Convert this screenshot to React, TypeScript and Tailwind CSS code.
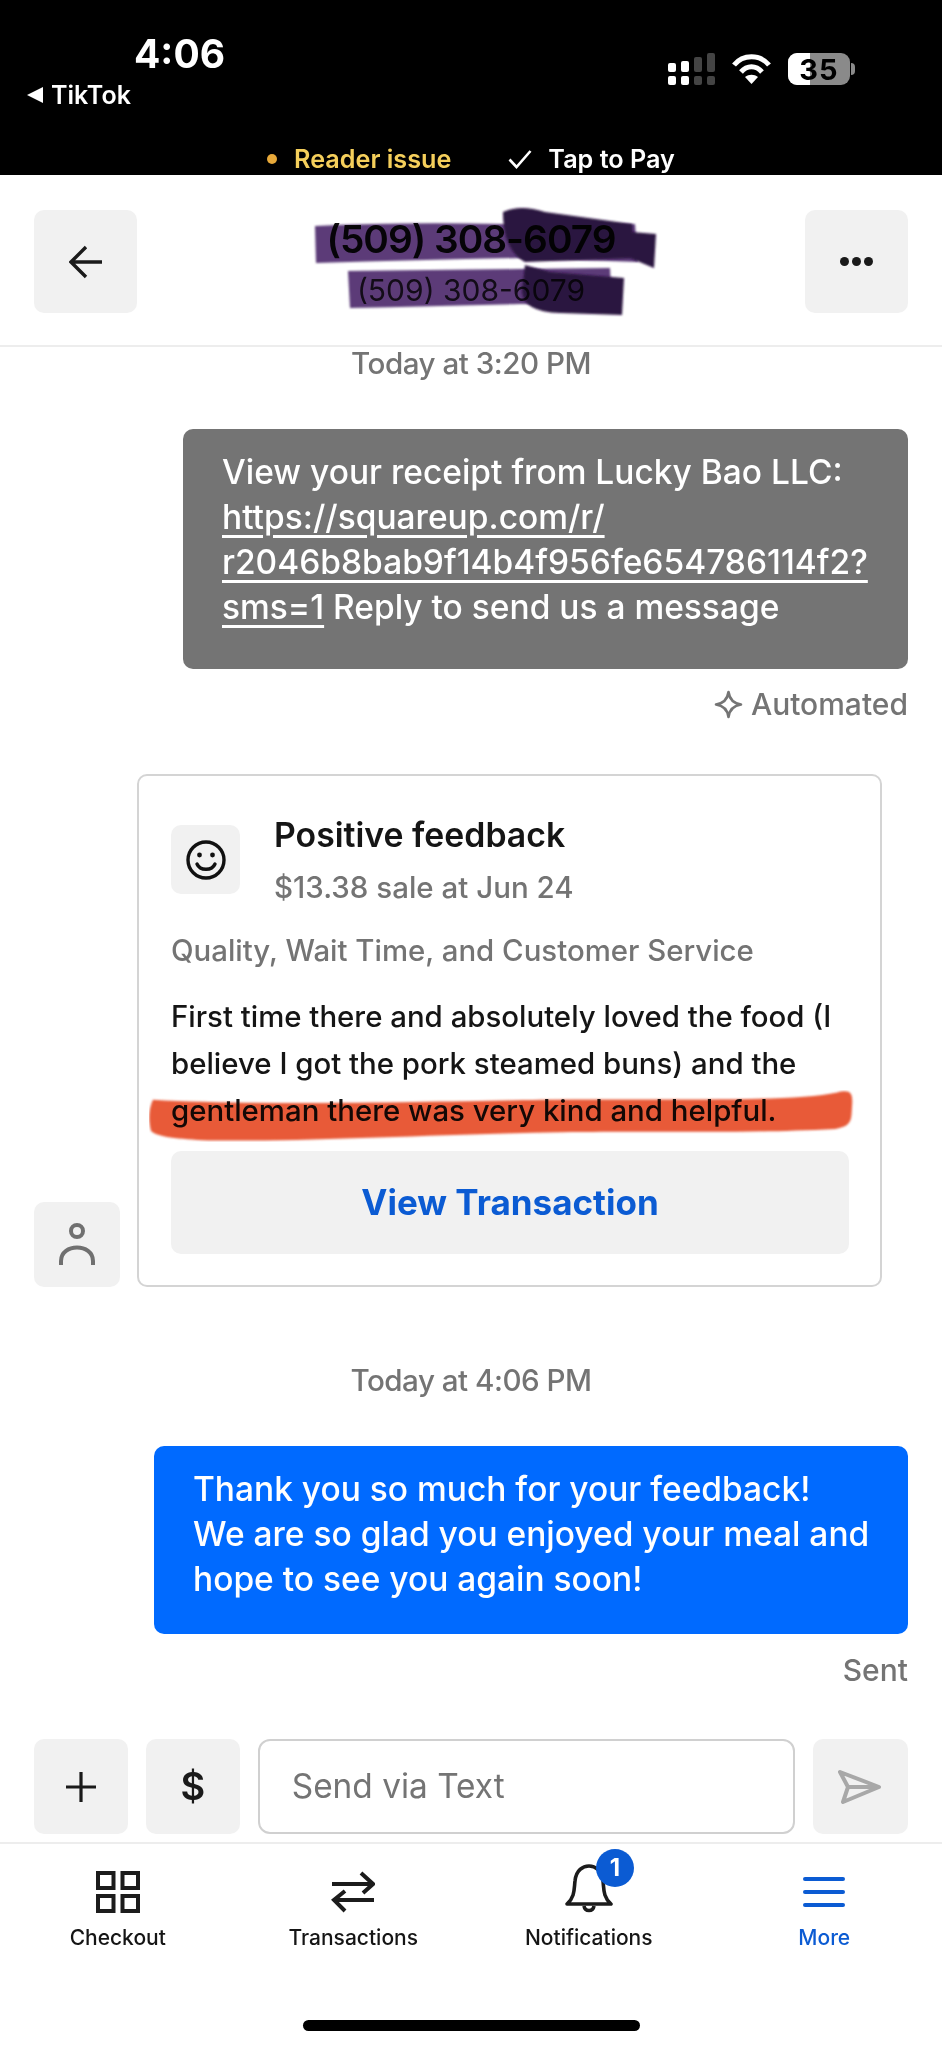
const font = { fontFamily: 'Inter, "Liberation Sans", sans-serif' };

function StatusBar() {
  return (
    <div className="relative flex h-[175px] flex-col bg-black text-white">
      <div className="flex h-[132px] justify-between pl-[27px] pr-[87px] pt-[31px]">
        <div>
          <div className="pl-[107px] text-[39px] font-bold leading-[46px]">4:06</div>
          <div className="mt-[3px] flex items-center gap-[8px] text-[25px] font-semibold leading-[30px]">
            <svg width="16" height="16" viewBox="0 0 16 16"><path d="M16 0 V16 L0 8 Z" fill="#fff" /></svg>
            TikTok
          </div>
        </div>
        <div className="mt-[22px] flex h-[32px] items-center gap-[16px]">
          <svg width="47" height="32" viewBox="0 0 47 32">
            <rect x="0" y="10" width="8" height="9" rx="2" fill="#fff" />
            <rect x="13" y="8" width="8" height="11" rx="2" fill="#fff" />
            <rect x="26" y="4" width="8" height="15" rx="2" fill="#444" />
            <rect x="39" y="0" width="8" height="19" rx="2" fill="#444" />
            <rect x="0" y="23" width="8" height="9" rx="2" fill="#fff" />
            <rect x="13" y="23" width="8" height="9" rx="2" fill="#fff" />
            <rect x="26" y="23" width="8" height="9" rx="2" fill="#444" />
            <rect x="39" y="23" width="8" height="9" rx="2" fill="#444" />
          </svg>
          <svg width="41" height="32" viewBox="0 0 41 32" fill="none" stroke="#fff" strokeWidth="5">
            <path d="M3 12 C12 1 29 1 38 12" />
            <path d="M10 19 C16 12 25 12 31 19" />
            <path d="M20.5 31 L14 24 C18 21 23 21 27 24 Z" fill="#fff" stroke="none" />
          </svg>
          <div className="flex items-center gap-[1px]">
            <div className="relative flex h-[32px] w-[62px] items-center justify-center overflow-hidden rounded-[9px] bg-[#8a8a8a]">
              <div className="absolute bottom-0 left-0 top-0 w-[22px] bg-white" />
              <span className="relative text-[29px] font-bold leading-none tracking-[1px] text-black">35</span>
            </div>
            <div className="h-[12px] w-[4px] rounded-r-full bg-[#8a8a8a]" />
          </div>
        </div>
      </div>
      <div className="flex h-[43px] items-center justify-center pt-[11px] text-[25.2px] font-semibold leading-[30px]">
        <div className="h-[10px] w-[10px] rounded-full bg-[#e8a93a]" />
        <span className="ml-[17px] text-[#f5cf5b]">Reader issue</span>
        <svg className="ml-[57px]" width="24" height="20" viewBox="0 0 24 20" fill="none" stroke="#fff" strokeWidth="2.6">
          <path d="M1.5 10.5 L8.5 18 L22.5 2" />
        </svg>
        <span className="ml-[16px]">Tap to Pay</span>
      </div>
    </div>
  );
}

function Header() {
  return (
    <div className="relative flex h-[172px] items-start justify-between border-b-2 border-[#ededed] bg-white px-[34px] pt-[35px]">
      <div className="flex h-[103px] w-[103px] items-center justify-center rounded-[10px] bg-[#f1f1f1]">
        <svg width="34" height="34" viewBox="0 0 34 34" fill="none" stroke="#1a1a1a" strokeWidth="3.4">
          <path d="M33 17 H3 M17 2 L2 17 L17 32" />
        </svg>
      </div>
      <div className="flex flex-col items-center pt-[6px]">
        <div className="text-[38.8px] font-semibold leading-[46px] tracking-[-1px] text-[#101010]">(509) 308-6079</div>
        <div className="mt-[10px] text-[30px] leading-[36px] text-[#333]">(509) 308-6079</div>
      </div>
      <div className="flex h-[103px] w-[103px] items-center justify-center gap-[3px] rounded-[10px] bg-[#f1f1f1]">
        <div className="h-[9px] w-[9px] rounded-full bg-[#1a1a1a]" />
        <div className="h-[9px] w-[9px] rounded-full bg-[#1a1a1a]" />
        <div className="h-[9px] w-[9px] rounded-full bg-[#1a1a1a]" />
      </div>
      {/* marker scribbles over the number */}
      <svg className="absolute left-0 top-0 mix-blend-multiply" width="942" height="172" viewBox="0 175 942 172">
        <defs>
          <filter id="soft"><feGaussianBlur stdDeviation="1.2" /></filter>
        </defs>
        <g fill="#5b3b78" filter="url(#soft)">
          <path d="M315 226 Q400 222 500 224 L635 224 L638 262 L520 258 Q420 260 316 263 Z" />
          <path d="M348 271 Q430 270 520 269 L610 268 L612 305 L520 304 Q430 306 350 308 Z" />
        </g>
        <g fill="#2c1240" filter="url(#soft)">
          <path d="M503 212 Q520 204 545 212 L632 224 L634 258 L525 262 Q503 250 503 212 Z" />
          <path d="M632 232 L656 234 L654 268 L630 258 Z" />
          <path d="M525 265 L550 272 L624 278 L622 315 L560 313 Q522 312 522 290 Z" />
        </g>
      </svg>
    </div>
  );
}

function Feedback() {
  return (
    <div className="flex items-end gap-[17px] pl-[34px]">
      <div className="flex h-[85px] w-[86px] items-center justify-center rounded-[10px] bg-[#f1f1f1]">
        <svg width="36" height="44" viewBox="0 0 36 44" fill="none" stroke="#707070" strokeWidth="4">
          <circle cx="18" cy="8" r="6" />
          <path d="M2 42 V38 C2 20 34 20 34 38 V42" />
        </svg>
      </div>
      <div className="relative h-[513px] w-[745px] rounded-[10px] border-2 border-[#d4d4d4] bg-white pl-[32px] pr-[31px]">
        <div className="flex gap-[34px] pt-[49px]">
          <div className="flex h-[69px] w-[69px] items-center justify-center rounded-[10px] bg-[#f1f1f1]">
            <svg width="40" height="40" viewBox="0 0 40 40" fill="none" stroke="#111" strokeWidth="3.4">
              <circle cx="20" cy="20" r="18" />
              <circle cx="13.5" cy="15" r="2.4" fill="#111" stroke="none" />
              <circle cx="26.5" cy="15" r="2.4" fill="#111" stroke="none" />
              <path d="M11 24 C14 31 26 31 29 24" strokeLinecap="round" />
            </svg>
          </div>
          <div className="-mt-[13px]">
            <div className="whitespace-nowrap text-[33.8px] font-semibold leading-[46px] text-[#151515]">Positive feedback</div>
            <div className="mt-[7px] whitespace-nowrap text-[29.5px] font-medium leading-[44px] text-[#747474]">$13.38 sale at Jun 24</div>
          </div>
        </div>
        <div className="mt-[20px] whitespace-nowrap text-[29.4px] font-medium leading-[44px] text-[#747474]">Quality, Wait Time, and Customer Service</div>
        <div className="mt-[20px] whitespace-nowrap text-[29.4px] font-medium leading-[47px] text-[#151515]">
          <div>First time there and absolutely loved the food (I</div>
          <div>believe I got the pork steamed buns) and the</div>
          <div>gentleman there was very kind and helpful.</div>
        </div>
        <div className="mt-[17px] flex h-[103px] items-center justify-center rounded-[10px] bg-[#f1f1f1] text-[35px] font-bold text-[#0b5bd3]">View Transaction</div>
        {/* orange marker over the last line */}
        <svg className="absolute left-[10px] top-[314px] mix-blend-multiply" width="706" height="52" viewBox="0 0 720 64" preserveAspectRatio="none">
          <defs>
            <filter id="softer"><feGaussianBlur stdDeviation="1" /></filter>
          </defs>
          <path filter="url(#softer)" d="M4 12 C120 20 300 14 400 12 C520 10 650 16 702 3 C716 -1 718 4 717 20 C716 36 718 44 700 48 C600 54 540 50 420 52 C300 54 160 64 60 62 C30 60 8 58 2 50 C-1 36 0 22 4 12 Z" fill="#e85a38" />
        </svg>
      </div>
    </div>
  );
}

function Composer() {
  return (
    <div className="flex h-[105px] gap-[18px] border-b-2 border-[#ededed] px-[34px] pb-[8px]">
      <div className="flex h-[95px] w-[94px] items-center justify-center rounded-[10px] bg-[#f1f1f1]">
        <svg width="32" height="32" viewBox="0 0 32 32" stroke="#1a1a1a" strokeWidth="3.2">
          <path d="M16 1 V31 M1 16 H31" />
        </svg>
      </div>
      <div className="flex h-[95px] w-[94px] items-center justify-center rounded-[10px] bg-[#f1f1f1] text-[38px] font-semibold text-[#1a1a1a]">$</div>
      <div className="flex h-[95px] w-[538px] items-center rounded-[12px] border-2 border-[#d0d0d0] pl-[32px] text-[33.4px] text-[#747474]">Send via Text</div>
      <div className="flex h-[95px] w-[95px] shrink-0 items-center justify-center rounded-[10px] bg-[#f1f1f1]">
        <svg width="44" height="34" viewBox="0 0 44 34" fill="none" stroke="#a8a8a8" strokeWidth="4" strokeLinejoin="round">
          <path d="M2 2 L41 17 L5 32 L10 17 Z M10 17 H41" />
        </svg>
      </div>
    </div>
  );
}

function BottomNav() {
  return (
    <div className="grid grid-cols-4 pt-[27px]">
      <div className="flex flex-col items-center">
        <svg width="44" height="42" viewBox="0 0 44 42" fill="none" stroke="#1c1c1c" strokeWidth="4">
          <rect x="2" y="2" width="15.5" height="15" />
          <rect x="26.5" y="2" width="15.5" height="15" />
          <rect x="2" y="25" width="15.5" height="15" />
          <rect x="26.5" y="25" width="15.5" height="15" />
        </svg>
        <div className="mt-[10px] text-[21px] font-medium leading-[30px] text-[#151515]">Checkout</div>
      </div>
      <div className="flex flex-col items-center">
        <svg width="44" height="42" viewBox="0 0 44 42" fill="none" stroke="#1c1c1c" strokeWidth="4">
          <path d="M1 13 H41 M30 2 L42 13 L32 22" />
          <path d="M43 29 H3 M14 20 L3 29 L14 40" />
        </svg>
        <div className="mt-[10px] text-[21px] font-medium leading-[30px] text-[#151515]">Transactions</div>
      </div>
      <div className="relative flex flex-col items-center">
        <svg width="48" height="50" className="-mt-[8px]" viewBox="0 0 48 50" fill="none" stroke="#1c1c1c" strokeWidth="3.6">
          <path d="M2 41 C10 34 9 26 10 18 C11 7 18 3 24 3 C30 3 37 7 38 18 C39 26 38 34 46 41 Z" strokeLinejoin="round" />
          <path d="M19 43 C20 49 28 49 29 43" />
        </svg>
        <div className="mt-[10px] text-[21px] font-medium leading-[30px] text-[#151515]">Notifications</div>
        <div className="absolute left-[125px] -top-[22px] flex h-[38px] w-[38px] items-center justify-center rounded-full bg-[#0b5bd3] text-[24px] font-bold text-white">1</div>
      </div>
      <div className="flex flex-col items-center">
        <div className="flex h-[42px] flex-col justify-center gap-[9px]">
          <div className="h-[4px] w-[42px] rounded-full bg-[#0b5bd3]" />
          <div className="h-[4px] w-[42px] rounded-full bg-[#0b5bd3]" />
          <div className="h-[4px] w-[42px] rounded-full bg-[#0b5bd3]" />
        </div>
        <div className="mt-[10px] text-[21px] font-medium leading-[30px] text-[#0b5bd3]">More</div>
      </div>
    </div>
  );
}

export default function App() {
  return (
    <div className="flex h-[2048px] w-[942px] flex-col overflow-hidden bg-white" style={font}>
      <StatusBar />
      <Header />
      <div className="-mt-[1px] text-center text-[29.6px] font-medium leading-[34px] tracking-[-0.5px] text-[#747474]">Today at 3:20 PM</div>
      <div className="flex justify-end px-[34px] pt-[49px]">
        <div className="w-[725px] rounded-[10px] bg-[#747474] pb-[39px] pl-[39px] pr-[20px] pt-[21px] text-[33.5px] font-medium leading-[45px] text-white">
          <div>View your receipt from Lucky Bao LLC:</div>
          <div className="underline underline-offset-[6px]">https://squareup.com/r/</div>
          <div className="underline underline-offset-[6px]">r2046b8bab9f14b4f956fe654786114f2?</div>
          <div><span className="underline underline-offset-[6px]">sms=1</span> Reply to send us a message</div>
        </div>
      </div>
      <div className="mt-[17px] flex items-center justify-end gap-[8px] pr-[34px] text-[30px] font-medium leading-[36px] text-[#747474]">
        <svg width="29" height="29" viewBox="0 0 29 29" fill="none" stroke="#747474" strokeWidth="2.6" strokeLinejoin="round">
          <path d="M14.5 2 C15.5 9 20 13.5 27 14.5 C20 15.5 15.5 20 14.5 27 C13.5 20 9 15.5 2 14.5 C9 13.5 13.5 9 14.5 2 Z" />
        </svg>
        Automated
      </div>
      <div className="mt-[52px]">
        <Feedback />
      </div>
      <div className="mt-[75px] text-center text-[29.6px] font-medium leading-[36px] tracking-[-0.5px] text-[#747474]">Today at 4:06 PM</div>
      <div className="flex justify-end px-[34px] pt-[48px]">
        <div className="w-[754px] rounded-[10px] bg-[#006aff] pb-[32px] pl-[39px] pr-[20px] pt-[21px] text-[33.5px] font-medium leading-[45px] text-white">
          <div>Thank you so much for your feedback!</div>
          <div>We are so glad you enjoyed your meal and</div>
          <div>hope to see you again soon!</div>
        </div>
      </div>
      <div className="mt-[18px] pr-[34px] text-right text-[30px] font-medium leading-[36px] text-[#747474]">Sent</div>
      <div className="mt-[51px]">
        <Composer />
      </div>
      <BottomNav />
      <div className="mx-auto mt-[67px] h-[11px] w-[337px] rounded-full bg-black" />
    </div>
  );
}
